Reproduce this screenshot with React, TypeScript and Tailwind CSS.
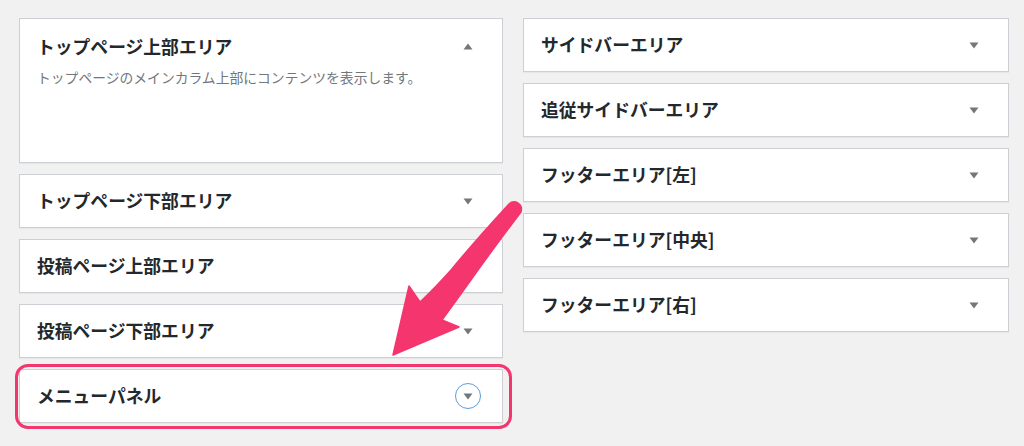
import React from "react";

const font = { fontFamily: '"Noto Sans CJK JP", "Noto Sans", sans-serif' };

function Tri({ up = false }: { up?: boolean }) {
  return (
    <svg width="10" height="7" viewBox="0 0 10 7" className="shrink-0">
      {up ? (
        <path d="M5 0.5 L9.5 6.5 L0.5 6.5 Z" fill="#72777c" />
      ) : (
        <path d="M0.5 0.5 L9.5 0.5 L5 6.5 Z" fill="#72777c" />
      )}
    </svg>
  );
}

function Box({
  title,
  arrow = "down",
}: {
  title: string;
  arrow?: "down" | "none" | "circle";
}) {
  return (
    <div className="relative h-[54px] bg-white border border-[#ccd0d4] shadow-[0_1px_1px_rgba(0,0,0,0.04)] flex items-center justify-between pl-[17px] pr-[29px]">
      <span className="text-[17.8px] font-bold text-[#23282d] leading-none">{title}</span>
      {arrow === "down" && <Tri />}
      {arrow === "circle" && (
        <span className="relative -mr-[8px] w-[26px] h-[26px] rounded-full border border-[#5b9dd9] flex items-center justify-center">
          <Tri />
        </span>
      )}
    </div>
  );
}

export default function App() {
  return (
    <div className="relative w-[1024px] h-[446px] bg-[#f1f1f1] overflow-hidden" style={font}>
      <div className="flex gap-[20px] pt-[18px] pl-[19px]">
        <div className="w-[484px] flex flex-col gap-[11px]">
          <div className="h-[145px] bg-white border border-[#ccd0d4] shadow-[0_1px_1px_rgba(0,0,0,0.04)] pl-[17px] pr-[29px] pt-[18px]">
            <div className="flex items-center justify-between">
              <span className="text-[17.8px] font-bold text-[#23282d] leading-[18px]">トップページ上部エリア</span>
              <Tri up />
            </div>
            <p className="mt-[13px] text-[13.8px] text-[#72777c] leading-[18px]">
              トップページのメインカラム上部にコンテンツを表示します。
            </p>
          </div>
          <Box title="トップページ下部エリア" />
          <Box title="投稿ページ上部エリア" arrow="none" />
          <Box title="投稿ページ下部エリア" />
          <div className="relative">
            <Box title="メニューパネル" arrow="circle" />
            <div className="absolute -left-[4px] -right-[9px] -top-[5px] -bottom-[6px] border-[3px] border-[#f2376f] rounded-[13px] pointer-events-none" />
          </div>
        </div>
        <div className="w-[486px] flex flex-col gap-[11px]">
          <Box title="サイドバーエリア" />
          <Box title="追従サイドバーエリア" />
          <Box title="フッターエリア[左]" />
          <Box title="フッターエリア[中央]" />
          <Box title="フッターエリア[右]" />
        </div>
      </div>
      <svg
        className="absolute left-0 top-0 pointer-events-none"
        width="1024"
        height="446"
        viewBox="0 0 1024 446"
      >
        <path
          d="M509 204 Q474 242 451 270 Q435 288 420 302 L409 286 L393 355 L459 327 L442 320 Q461 294 478 270 Q499 241 521 212 Q523 205 516 202 Q512 201 509 204 Z"
          fill="#f5356e"
          stroke="#f5356e"
          strokeWidth="1.5"
          strokeLinejoin="round"
        />
      </svg>
    </div>
  );
}
